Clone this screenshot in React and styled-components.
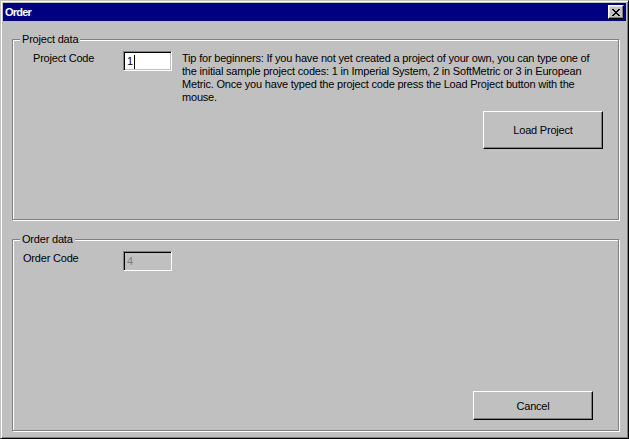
import React from 'react'
import styled, { createGlobalStyle } from 'styled-components'

const GlobalStyle = createGlobalStyle`
  html, body {
    margin: 0;
    padding: 0;
    background: #c0c0c0;
  }
  body {
    font-family: 'Liberation Sans', Arial, sans-serif;
    font-size: 11px;
    letter-spacing: -0.2px;
    color: #000;
  }
`

const Window = styled.div`
  width: 629px;
  height: 439px;
  box-sizing: border-box;
  background: #c0c0c0;
  border: 1px solid;
  border-color: #c0c0c0 #000 #000 #c0c0c0;
  box-shadow: inset 1px 1px 0 #fff, inset -1px -1px 0 #808080;
  padding: 2px;
  display: flex;
  flex-direction: column;
`

const TitleBar = styled.div`
  height: 18px;
  background: #000080;
  display: flex;
  align-items: center;
  justify-content: space-between;
  padding: 0 2px 0 2px;
`

const Title = styled.span`
  color: #fff;
  font-weight: bold;
  font-size: 11px;
  letter-spacing: -0.8px;
  line-height: 13px;
`

const CloseButton = styled.button`
  width: 16px;
  height: 14px;
  box-sizing: border-box;
  padding: 0;
  background: #c0c0c0;
  border: 1px solid;
  border-color: #fff #000 #000 #fff;
  box-shadow: inset -1px -1px 0 #808080, inset 1px 1px 0 #dfdfdf;
  display: flex;
  align-items: center;
  justify-content: center;
`

const Body = styled.div`
  flex: 1;
  display: flex;
  flex-direction: column;
  gap: 13px;
  padding: 12px 7px 5px 9px;
`

const Group = styled.fieldset`
  margin: 0;
  padding: 0;
  height: ${p => p.$height}px;
  box-sizing: border-box;
  border: 1px solid #808080;
  box-shadow: inset 1px 1px 0 #fff, 1px 1px 0 #fff;
  min-inline-size: 0;
`

const Legend = styled.legend`
  margin-left: 7px;
  padding: 0 2px;
  font-size: 11px;
  line-height: 13px;
  background: #c0c0c0;
`

const Row = styled.div`
  display: flex;
  align-items: flex-start;
  margin-top: 5px;
  padding-left: ${p => p.$indent}px;
`

const Label = styled.span`
  width: ${p => p.$width}px;
  flex: none;
  line-height: 13px;
  margin-top: 1px;
`

const TextBox = styled.div`
  width: 49px;
  height: 20px;
  box-sizing: border-box;
  flex: none;
  border: 1px solid;
  border-color: #808080 #fff #fff #808080;
  box-shadow: inset 1px 1px 0 #000, inset -1px -1px 0 #c0c0c0;
  background: ${p => (p.$disabled ? '#c0c0c0' : '#fff')};
  color: ${p => (p.$disabled ? '#808080' : '#000')};
  padding: 3px 0 0 3px;
  line-height: 13px;
  display: flex;
  align-items: flex-start;
`

const Caret = styled.span`
  width: 1px;
  height: 14px;
  background: #000;
  margin-left: 1px;
`

const Tip = styled.p`
  margin: 1px 0 0 10px;
  line-height: 13px;
`

const ButtonRow = styled.div`
  display: flex;
  justify-content: flex-end;
  margin-top: ${p => p.$top}px;
  margin-right: ${p => p.$right}px;
`

const Button = styled.button`
  width: 120px;
  height: ${p => p.$height}px;
  box-sizing: border-box;
  padding: 0;
  background: #c0c0c0;
  font-family: 'Liberation Sans', Arial, sans-serif;
  font-size: 11px;
  letter-spacing: -0.2px;
  color: #000;
  border: 1px solid;
  border-color: #fff #000 #000 #fff;
  box-shadow: inset -1px -1px 0 #808080;
`

const CloseIcon = () => (
  <svg width="8" height="7" viewBox="0 0 8 7" shapeRendering="crispEdges">
    <path
      fill="#000"
      d="M0 0h2v1H0zM6 0h2v1H6zM1 1h2v1H1zM5 1h2v1H5zM2 2h4v1H2zM3 3h2v1H3zM2 4h4v1H2zM1 5h2v1H1zM5 5h2v1H5zM0 6h2v1H0zM6 6h2v1H6z"
    />
  </svg>
)

const App = () => {
  return (
    <>
      <GlobalStyle />
      <Window>
        <TitleBar>
          <Title>Order</Title>
          <CloseButton aria-label="Close">
            <CloseIcon />
          </CloseButton>
        </TitleBar>
        <Body>
          <Group $height={187}>
            <Legend>Project data</Legend>
            <Row $indent={20}>
              <Label $width={90}>Project Code</Label>
              <TextBox>
                1<Caret />
              </TextBox>
              <Tip>
                Tip for beginners: If you have not yet created a project of your own, you can type one of
                <br />
                the initial sample project codes: 1 in Imperial System, 2 in SoftMetric or 3 in European
                <br />
                Metric. Once you have typed the project code press the Load Project button with the
                <br />
                mouse.
              </Tip>
            </Row>
            <ButtonRow $top={7} $right={15}>
              <Button $height={38}>Load Project</Button>
            </ButtonRow>
          </Group>
          <Group $height={198}>
            <Legend>Order data</Legend>
            <Row $indent={10}>
              <Label $width={100}>Order Code</Label>
              <TextBox $disabled>4</TextBox>
            </Row>
            <ButtonRow $top={120} $right={25}>
              <Button $height={29}>Cancel</Button>
            </ButtonRow>
          </Group>
        </Body>
      </Window>
    </>
  )
}

export default App
